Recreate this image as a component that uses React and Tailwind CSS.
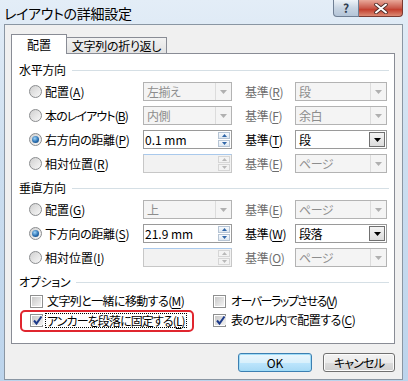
import React from "react";

const Radio = ({ checked }) => (
  <span className="w-[13px] h-[13px] shrink-0 rounded-full border border-[#8a8c8e] bg-[linear-gradient(135deg,#d0d0d0,#f8f8f8)] flex items-center justify-center">
    {checked && (
      <span className="w-[7px] h-[7px] rounded-full bg-[radial-gradient(circle_at_40%_35%,#9fd6fb,#2a6fb0_55%,#0d3b70)]" />
    )}
  </span>
);

const Checkbox = ({ checked }) => (
  <span className="w-[13px] h-[13px] shrink-0 border border-[#8e8f8f] bg-white p-px flex">
    <span className="flex-1 bg-[linear-gradient(135deg,#c9c9c9,#f3f3f3)] flex items-center justify-center">
      {checked && (
        <svg width="11" height="11" viewBox="0 0 11 11">
          <path d="M2 5.5 L4.5 8.5 L9.5 1.5" fill="none" stroke="#1c3a8a" strokeWidth="2" />
        </svg>
      )}
    </span>
  </span>
);

const Arrow = ({ color }) => (
  <svg width="7" height="4" viewBox="0 0 7 4">
    <path d="M0 0 H7 L3.5 4 Z" fill={color} />
  </svg>
);

const Combo = ({ text, disabled, w }) => (
  <div
    className={`h-[19px] flex border ${w} ${
      disabled ? "border-[#b3b3b3] bg-[#f4f4f4] text-[#8d8d8d]" : "border-[#9a9a9a] bg-white text-black"
    }`}
  >
    <span className="flex-1 pl-[3px] leading-[17px] whitespace-nowrap overflow-hidden tracking-[-0.5px]">{text}</span>
    {disabled ? (
      <span className="w-[16px] border-l border-[#dcdcdc] flex items-center justify-center">
        <Arrow color="#b0b0b0" />
      </span>
    ) : (
      <span className="w-[16px] m-px border border-[#707070] bg-[linear-gradient(#f4f4f4,#dcdcdc)] flex items-center justify-center">
        <Arrow color="#000" />
      </span>
    )}
  </div>
);

const Spin = ({ text, disabled }) => (
  <div
    className={`h-[19px] w-[89px] flex border ${
      disabled
        ? "border-[#c7c7c7] border-t-[#a9c9ec] bg-[#f2f2f2]"
        : "border-[#9a9a9a] bg-white"
    }`}
  >
    <span className="flex-1 pl-[1px] leading-[17px] whitespace-nowrap">{text}</span>
    <span className="w-[12px] my-px mr-px flex flex-col gap-px">
      {[0, 1].map((i) => (
        <span
          key={i}
          className={`flex-1 border flex items-center justify-center ${
            disabled ? "border-[#d6d6d6] bg-[#f3f3f3]" : "border-[#b6c4d4] bg-[linear-gradient(#f7fafd,#dde7f1)]"
          }`}
        >
          <svg width="5" height="3" viewBox="0 0 5 3" className={i === 0 ? "rotate-180" : ""}>
            <path d="M0 0 H5 L2.5 3 Z" fill={disabled ? "#b8b8b8" : "#3066a8"} />
          </svg>
        </span>
      ))}
    </span>
  </div>
);

const Key = ({ k }) => <span className="underline underline-offset-[2px]">{k}</span>;

const Label = ({ text, k, gray, tr = "" }) => (
  <span className={`${gray ? "text-[#6d6d6d]" : "text-black"} ${tr}`}>
    {text}(<Key k={k} />)
  </span>
);

const Header = ({ text, mt }) => (
  <div className={`flex items-center h-[14px] pl-[7px] ${mt}`}>
    <span className="leading-none tracking-[-0.3px]">{text}</span>
    <div className="flex-1 h-px bg-[#d5dfe5] ml-[6px] mr-[5px]" />
  </div>
);

const Row = ({ checked, label, k, tr, field, baseK, baseText, baseOn, mt }) => (
  <div className={`flex items-center h-[19px] pl-[17px] ${mt}`}>
    <Radio checked={checked} />
    <span className="ml-[3px] w-[98px] whitespace-nowrap">
      <Label text={label} k={k} tr={tr} />
    </span>
    {field}
    <span className="ml-[13px] w-[50px] whitespace-nowrap">
      <Label text="基準" k={baseK} gray={!baseOn} tr="tracking-[-0.3px]" />
    </span>
    <Combo text={baseText} disabled={!baseOn} w="w-[92px]" />
  </div>
);

export default function App() {
  return (
    <div className="w-[408px] h-[381px] overflow-hidden flex flex-col bg-[linear-gradient(180deg,#e3edf7_0%,#cddff0_40%,#bcd4ec_100%)] text-[12px] text-black font-['Meiryo_UI','Noto_Sans_CJK_JP',sans-serif] [font-feature-settings:'palt']">
      <div className="h-[24px] flex items-start shrink-0">
        <span className="pl-[4px] pt-[4px] leading-[18px] text-[14px] tracking-[-0.3px]">レイアウトの詳細設定</span>
        <div className="ml-auto mr-[5px] flex">
          <div className="w-[26px] h-[17px] border border-[#6f7f94] border-t-0 rounded-bl-[4px] bg-[linear-gradient(#eef3f8,#c7d4e2_50%,#b4c5d8)] flex items-center justify-center text-[#2f3d4f] text-[12px] font-bold leading-none">
            ?
          </div>
          <div className="w-[44px] h-[17px] border border-[#7a3a32] border-t-0 border-l-0 rounded-br-[4px] bg-[linear-gradient(#e9a99a,#c9594a_50%,#c3402f_60%,#dc8b75)] flex items-center justify-center">
            <svg width="14" height="11" viewBox="0 0 14 11">
              <path d="M2 1.5 L12 9.5 M12 1.5 L2 9.5" stroke="#4a2a26" strokeWidth="3.6" strokeLinecap="round" />
              <path d="M2 1.5 L12 9.5 M12 1.5 L2 9.5" stroke="#fff" strokeWidth="2" strokeLinecap="round" />
            </svg>
          </div>
        </div>
      </div>

      <div className="ml-[4px] mr-[5px] h-[356px] border border-[#8a96a3] bg-[#f0f0f0] flex flex-col">
        <div className="flex items-end pl-[6px] pt-[8px] h-[28px]">
          <div className="relative z-10 w-[56px] h-[20px] -mb-px border border-b-0 border-[#898c95] bg-white flex items-center justify-center">
            配置
          </div>
          <div className="w-[101px] h-[16px] -ml-px border border-b-0 border-[#898c95] bg-[linear-gradient(#f2f2f2,#e2e2e2)] flex items-center justify-center tracking-[-0.3px]">
            文字列の折り返し
          </div>
        </div>

        <div className="ml-[6px] w-[384px] h-[291px] border border-[#898c95] bg-white flex flex-col">
          <Header text="水平方向" mt="mt-[9px]" />
          <Row
            mt="mt-[5px]"
            label="配置"
            k="A"
            field={<Combo text="左揃え" disabled w="w-[89px]" />}
            baseK="R"
            baseText="段"
          />
          <Row
            mt="mt-[5px]"
            label="本のレイアウト"
            k="B"
            tr="tracking-[-0.9px]"
            field={<Combo text="内側" disabled w="w-[89px]" />}
            baseK="F"
            baseText="余白"
          />
          <Row
            mt="mt-[5px]"
            checked
            label="右方向の距離"
            k="P"
            tr="tracking-[-0.3px]"
            field={<Spin text="0.1 mm" />}
            baseK="T"
            baseText="段"
            baseOn
          />
          <Row
            mt="mt-[5px]"
            label="相対位置"
            k="R"
            field={<Spin text="" disabled />}
            baseK="E"
            baseText="ページ"
          />

          <Header text="垂直方向" mt="mt-[8px]" />
          <Row
            mt="mt-[5px]"
            label="配置"
            k="G"
            field={<Combo text="上" disabled w="w-[89px]" />}
            baseK="E"
            baseText="ページ"
          />
          <Row
            mt="mt-[5px]"
            checked
            label="下方向の距離"
            k="S"
            tr="tracking-[-0.3px]"
            field={<Spin text="21.9 mm" />}
            baseK="W"
            baseText="段落"
            baseOn
          />
          <Row
            mt="mt-[5px]"
            label="相対位置"
            k="I"
            field={<Spin text="" disabled />}
            baseK="O"
            baseText="ページ"
          />

          <Header text="オプション" mt="mt-[8px]" />
          <div className="mt-[4px] flex items-center h-[16px]">
            <span className="pl-[18px] w-[201px] flex items-center">
              <Checkbox />
              <span className="ml-[4px] whitespace-nowrap tracking-[-0.6px]">
                文字列と一緒に移動する(<Key k="M" />)
              </span>
            </span>
            <Checkbox />
            <span className="ml-[5px] whitespace-nowrap tracking-[-1.5px]">
              オーバーラップさせる(<Key k="V" />)
            </span>
          </div>
          <div className="mt-[3px] flex items-center h-[16px]">
            <span className="relative pl-[18px] w-[201px] flex items-center">
              <span className="absolute left-[8px] -top-[3px] w-[174px] h-[22px] border-2 border-[#e0262f] rounded-[5px]" />
              <Checkbox checked />
              <span className="ml-[2px] px-[1px] border border-dotted border-black whitespace-nowrap leading-[13px] tracking-[-0.9px]">
                アンカーを段落に固定する(<Key k="L" />)
              </span>
            </span>
            <Checkbox checked />
            <span className="ml-[5px] whitespace-nowrap tracking-[-0.5px]">
              表のセル内で配置する(<Key k="C" />)
            </span>
          </div>
        </div>

        <div className="mt-[9px] flex justify-end gap-[11px] pr-[7px]">
          <button className="w-[74px] h-[19px] rounded-[3px] border border-[#3c7fb1] bg-[linear-gradient(#eaf6fd,#d9f0fc_50%,#bee6fd_50%,#a7d9f5)] shadow-[inset_0_0_0_1px_#9fdcf8] flex items-center justify-center leading-none">
            OK
          </button>
          <button className="w-[72px] h-[19px] rounded-[3px] border border-[#707070] bg-[linear-gradient(#f2f2f2,#ebebeb_50%,#dddddd_50%,#cfcfcf)] shadow-[inset_0_0_0_1px_#fcfcfc] flex items-center justify-center leading-none tracking-[-0.8px]">
            キャンセル
          </button>
        </div>
      </div>
    </div>
  );
}
